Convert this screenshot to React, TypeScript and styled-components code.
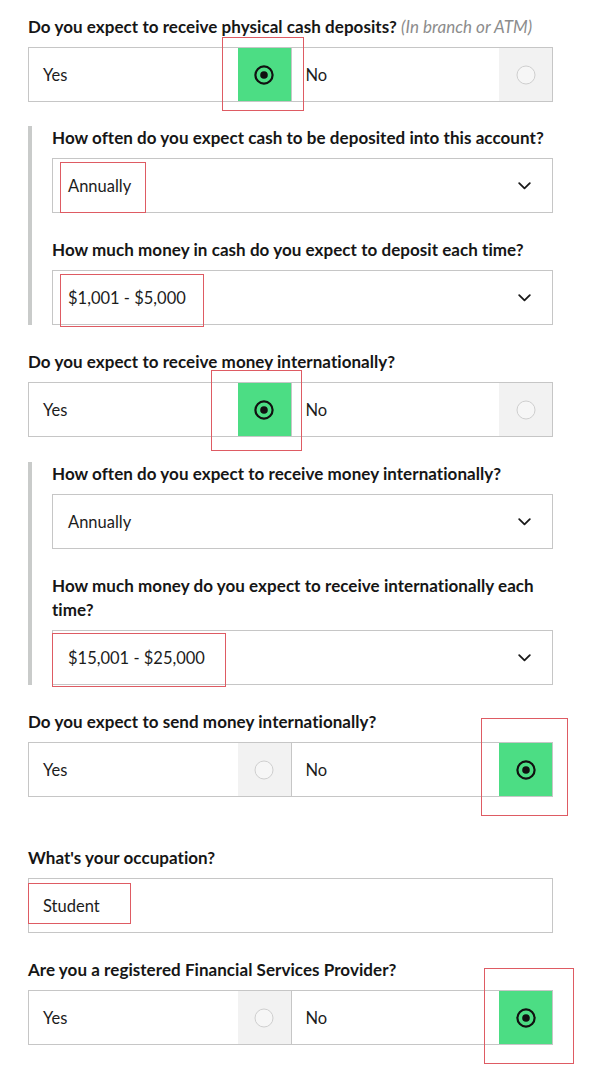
import React from "react";
import styled, { createGlobalStyle } from "styled-components";

const Global = createGlobalStyle`
  html, body { margin: 0; padding: 0; background: #ffffff; }
  body { font-family: Lato, "Open Sans", Arial, sans-serif; color: #1c1c1c; }
  * { box-sizing: border-box; }
`;

const Page = styled.div`
  position: relative;
  width: 591px;
  min-height: 1085px;
  padding: 15px 38px 0 28px;
  display: flex;
  flex-direction: column;
`;

const Field = styled.div<{ $gap?: number }>`
  display: flex;
  flex-direction: column;
  gap: 8px;
  margin-bottom: ${(p) => p.$gap ?? 25}px;
`;

const Label = styled.div`
  font-size: 17px;
  font-weight: 700;
  line-height: 24px;
  color: #161616;
  letter-spacing: 0.05px;
`;

const Hint = styled.span`
  font-style: italic;
  font-weight: 400;
  color: #8c8c8c;
`;

const RadioBox = styled.div`
  display: grid;
  grid-template-columns: 1fr 1fr;
  height: 55px;
  border: 1px solid #c6c6c6;
`;

const Option = styled.div<{ $second?: boolean }>`
  display: flex;
  align-items: stretch;
  border-left: ${(p) => (p.$second ? "1px solid #c6c6c6" : "none")};
`;

const OptionText = styled.div`
  flex: 1;
  display: flex;
  align-items: center;
  padding-left: 14px;
  font-size: 16.5px;
  color: #1c1c1c;
`;

const RadioCell = styled.div<{ $on: boolean }>`
  width: 53px;
  display: flex;
  align-items: center;
  justify-content: center;
  background: ${(p) => (p.$on ? "#4cdd84" : "#f2f2f2")};
`;

const Nested = styled.div`
  display: flex;
  flex-direction: column;
  gap: 25px;
  border-left: 4px solid #c9cbca;
  padding-left: 20px;
  margin-bottom: 25px;
`;

const NestedField = styled.div`
  display: flex;
  flex-direction: column;
  gap: 8px;
`;

const Select = styled.div`
  height: 55px;
  border: 1px solid #c6c6c6;
  display: flex;
  align-items: center;
  justify-content: space-between;
  padding: 0 21px 0 15px;
  font-size: 16.5px;
  color: #1c1c1c;
`;

const Input = styled.div`
  height: 55px;
  border: 1px solid #c6c6c6;
  display: flex;
  align-items: center;
  padding-left: 14px;
  font-size: 16.5px;
  color: #1c1c1c;
`;

const Mark = styled.div<{ $x: number; $y: number; $w: number; $h: number }>`
  position: absolute;
  left: ${(p) => p.$x}px;
  top: ${(p) => p.$y}px;
  width: ${(p) => p.$w}px;
  height: ${(p) => p.$h}px;
  border: 1.5px solid #de5b63;
  pointer-events: none;
`;

const RadioIcon = ({ on }: { on: boolean }) =>
  on ? (
    <svg width="20" height="20" viewBox="0 0 20 20">
      <circle cx="10" cy="10" r="8.6" fill="none" stroke="#111" strokeWidth="2.2" />
      <circle cx="10" cy="10" r="3.8" fill="#111" />
    </svg>
  ) : (
    <svg width="20" height="20" viewBox="0 0 20 20">
      <circle cx="10" cy="10" r="9" fill="#f6f6f6" stroke="#cfcfcf" strokeWidth="1" />
    </svg>
  );

const Chevron = () => (
  <svg width="13" height="8" viewBox="0 0 13 8">
    <path d="M1.2 1.2 L6.5 6.4 L11.8 1.2" fill="none" stroke="#1a1a1a" strokeWidth="1.8" strokeLinecap="round" strokeLinejoin="round" />
  </svg>
);

const YesNo = ({ yes }: { yes: boolean }) => (
  <RadioBox>
    <Option>
      <OptionText>Yes</OptionText>
      <RadioCell $on={yes}>
        <RadioIcon on={yes} />
      </RadioCell>
    </Option>
    <Option $second>
      <OptionText>No</OptionText>
      <RadioCell $on={!yes}>
        <RadioIcon on={!yes} />
      </RadioCell>
    </Option>
  </RadioBox>
);

const SelectField = ({ label, value }: { label: string; value: string }) => (
  <NestedField>
    <Label>{label}</Label>
    <Select>
      <span>{value}</span>
      <Chevron />
    </Select>
  </NestedField>
);

export default function App() {
  return (
    <>
      <Global />
      <Page>
        <Field $gap={24}>
          <Label>
            Do you expect to receive physical cash deposits? <Hint>(In branch or ATM)</Hint>
          </Label>
          <YesNo yes />
        </Field>
        <Nested>
          <SelectField label="How often do you expect cash to be deposited into this account?" value="Annually" />
          <SelectField label="How much money in cash do you expect to deposit each time?" value="$1,001 - $5,000" />
        </Nested>
        <Field>
          <Label>Do you expect to receive money internationally?</Label>
          <YesNo yes />
        </Field>
        <Nested>
          <SelectField label="How often do you expect to receive money internationally?" value="Annually" />
          <SelectField label="How much money do you expect to receive internationally each time?" value="$15,001 - $25,000" />
        </Nested>
        <Field $gap={49}>
          <Label>Do you expect to send money internationally?</Label>
          <YesNo yes={false} />
        </Field>
        <Field $gap={25}>
          <Label>What's your occupation?</Label>
          <Input>Student</Input>
        </Field>
        <Field>
          <Label>Are you a registered Financial Services Provider?</Label>
          <YesNo yes={false} />
        </Field>

        <Mark $x={222} $y={37} $w={82} $h={74} />
        <Mark $x={60} $y={162} $w={86} $h={51} />
        <Mark $x={60} $y={274} $w={144} $h={53} />
        <Mark $x={211} $y={370} $w={91} $h={81} />
        <Mark $x={52} $y={633} $w={174} $h={54} />
        <Mark $x={481} $y={718} $w={87} $h={98} />
        <Mark $x={28} $y={883} $w={103} $h={41} />
        <Mark $x={484} $y={968} $w={90} $h={96} />
      </Page>
    </>
  );
}
